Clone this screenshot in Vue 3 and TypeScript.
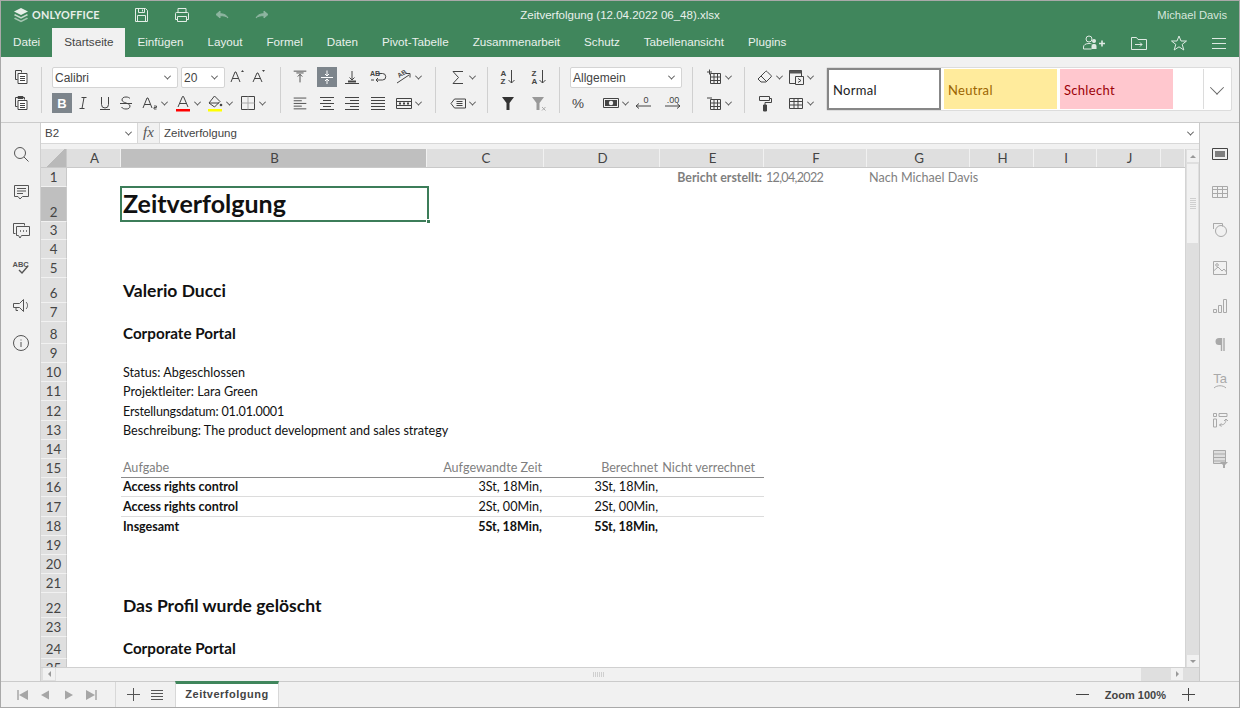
<script setup lang="ts">
// Spreadsheet editor window: header, ribbon, formula bar, sheet grid and status bar.
interface Tool { i?: string; w?: number; ml?: number; chev?: boolean; active?: boolean; dim?: boolean; combo?: string }
interface Group { w: number; rows: Tool[][] }
interface Cell { t: string; c?: string }

const line = (d: string) => `<path d="${d}"/>`

const icons: Record<string, string> = {
  logo: '<path d="M8 1 15 4.500 8 8 1 4.500Z" fill="currentColor" stroke="none"/><path d="M2 7 8 10l6-3 1 1.300-7 3.500-7-3.500Z" fill="currentColor" stroke="none" opacity=".8"/><path d="M2 10.500 8 13.500l6-3 1 1.300-7 3.500-7-3.500Z" fill="currentColor" stroke="none" opacity=".6"/>',
  save: '<path d="M3.500 3.500h10l2 2v11h-12Z"/><path d="M6.500 3.500v4h6v-4M10.500 4.500v2M5.500 16.500v-6h8v6"/>',
  print: '<path d="M6 7V3.500h8V7M5.500 14.500h-2v-6a1 1 0 0 1 1-1h11a1 1 0 0 1 1 1v6h-2"/><path d="M5.500 11.500h9v5h-9Z"/>',
  undo: '<path d="M4 9.500 8 6v2.700c4 0 6.500 1.300 8 4.300-2-2-4-2.300-8-2.300V13Z" fill="currentColor"/>',
  redo: '<path d="M16 9.500 12 6v2.700c-4 0-6.500 1.300-8 4.300 2-2 4-2.300 8-2.300V13Z" fill="currentColor"/>',
  person: '<circle cx="8" cy="6" r="3"/><path d="M2.500 16v-2c0-2 2-3.500 5.500-3.500 1 0 2 .1 2.500.4M2.500 16h8"/><circle cx="13" cy="8" r="2" fill="currentColor" stroke="none"/><path d="M10.500 16v-3a2 2 0 0 1 2-2h1a2 2 0 0 1 2 2v3Z" fill="currentColor" stroke="none"/><path d="M18 10.500h6M21 7.500v6" stroke-width="1.600"/>',
  folder: '<path d="M2.500 4.500h5l1.500 2h8.500v10h-15Z"/><path d="M6 11.500h7M11 9.500l2 2-2 2"/>',
  star: '<path d="M10 3l2 5h5.500l-4.300 3.400 1.600 5.600L10 13.800 5.200 17l1.600-5.600L2.500 8H8Z"/>',
  burger: line('M3 5.500h14M3 10.500h14M3 15.500h14'),
  copy: '<path d="M4.500 3.500h6v2M4.500 3.500v9h2"/><path d="M7 6.500h9v10H7Z" fill="#fff"/><path d="M9 9.500h5M9 11.500h5M9 13.500h5"/>',
  paste: '<path d="M4.500 4.500h9v2M4.500 4.500v9h2M7 3.500h5v2H7Z"/><path d="M7 7.500h9v9H7Z" fill="#fff"/><path d="M9 10.500h5M9 12.500h5M9 14.500h5"/>',
  grow: '<path d="M4 15 8 5h1l4 10M5.500 11.500h6"/><path d="M14 5l1.500-2L17 5Z" fill="currentColor" stroke="none"/>',
  shrink: '<path d="M5 15 9 6h1l4 9M6.500 11.500h6"/><path d="M14 3l1.500 2L17 3Z" fill="currentColor" stroke="none"/>',
  bold: '<text x="10" y="15" text-anchor="middle" font-family="Liberation Sans" font-size="13" font-weight="700" fill="#fff" stroke="none">B</text>',
  italic: line('M8.500 4.500h5M6.500 15.500h5M11 4.500l-2 11'),
  under: line('M6.500 4v7.500a3.500 3.500 0 0 0 7 0V4M5 16.500h10'),
  strike: line('M14 5.500c-1-1-2-1.500-4-1.500-2.500 0-4 1-4 3 0 3 8 3 8 6 0 2-1.500 3-4 3-2 0-3.500-.5-4.500-2M4 10.500h12'),
  sub: '<path d="M3 15 7 5h1l4 10M4.500 11.500h6"/><path d="M14 13h2.500v1.500H14V16h2.500" stroke-width=".9"/>',
  fontc: '<path d="M5 14 9.500 3.500h1L15 14M6.500 10.500h7"/><path d="M3 16h14v2.500H3Z" fill="#f00" stroke="none"/>',
  fill: '<path d="M9.500 3 15 8.500 9.500 14 4 10Z"/><path d="M4 10h10"/><circle cx="16" cy="12" r="1.300" fill="currentColor" stroke="none"/><path d="M3 16h14v2.500H3Z" fill="#ff0" stroke="none"/>',
  border: '<path d="M3.500 3.500h13v13h-13Z"/><path d="M10 3.500v13M3.500 10h13" stroke="#aaa"/>',
  atop: '<path d="M3 3.500h14M6 5.500h8" /><path d="M10 7v9M7.500 9.500 10 7l2.500 2.500"/>',
  amid: '<g stroke="#fff"><path d="M4 10.500h12"/><path d="M10 3.500v5M8 7l2 2 2-2M10 17v-5M8 14l2-2 2 2"/></g>',
  abot: '<path d="M3 16.500h14" /><path d="M6 14.500h8" stroke-width="2"/><path d="M10 4v9M7.500 10.500 10 13l2.500-2.500"/>',
  wrap: '<text x="2" y="8.500" font-family="Liberation Sans" font-size="7" font-weight="700" fill="currentColor" stroke="none">AB</text><path d="M11 6.500h3.500a3 3 0 0 1 0 6.500H8M10 11l-2 2 2 2M3 13h3"/>',
  orient: '<text x="4" y="9" font-family="Liberation Sans" font-size="6.500" font-weight="700" fill="currentColor" stroke="none" transform="rotate(-35 8 8)">AB</text><path d="M3 16 15 8M12 6.500h4v4"/>',
  left: line('M3 4.500h14M3 7.500h9M3 10.500h14M3 13.500h9M3 16.500h14'),
  center: line('M3 4.500h14M6 7.500h8M3 10.500h14M6 13.500h8M3 16.500h14'),
  right: line('M3 4.500h14M8 7.500h9M3 10.500h14M8 13.500h9M3 16.500h14'),
  just: line('M3 4.500h14M3 7.500h14M3 10.500h14M3 13.500h14M3 16.500h14'),
  merge: '<path d="M2.500 5.500h15v10h-15Z"/><path d="M2.500 8.500h15M2.500 12.500h15" /><path d="M5 10.500h2M9 10.500h2M13 10.500h2" stroke-width="2"/>',
  sigma: line('M15 4.500H5l5.500 6L5 16.500h10'),
  tag: '<path d="M3 10.500 6.500 6h11v9h-11Z"/><path d="M8.500 8.500h6M8.500 10.500h6M8.500 12.500h6" stroke-width="1.200"/>',
  az: '<text x="2.500" y="9" font-family="Liberation Sans" font-size="8" font-weight="700" fill="currentColor" stroke="none">A</text><text x="2.500" y="17" font-family="Liberation Sans" font-size="8" font-weight="700" fill="currentColor" stroke="none">Z</text><path d="M13.500 3v13M10.500 13l3 3 3-3"/>',
  za: '<text x="2.500" y="9" font-family="Liberation Sans" font-size="8" font-weight="700" fill="currentColor" stroke="none">Z</text><text x="2.500" y="17" font-family="Liberation Sans" font-size="8" font-weight="700" fill="currentColor" stroke="none">A</text><path d="M13.500 3v13M10.500 13l3 3 3-3"/>',
  filter: '<path d="M4 4h12l-4.500 6v7h-3v-7Z" fill="#333" stroke="none"/>',
  nofilter: '<path d="M3 4h12l-4.500 6v7h-3v-7Z" fill="#999" stroke="none"/><path d="M13 14l3.500 3.500M16.500 14 13 17.500" stroke="#aaa"/>',
  percent: '<text x="9" y="16" text-anchor="middle" font-family="Liberation Sans" font-size="15" fill="currentColor" stroke="none">%</text>',
  money: '<path d="M2.500 5.500h15v9h-15Z"/><path d="M4 7h12v6H4Z" fill="#444" stroke="none"/><circle cx="10" cy="10" r="2.200" fill="#f1f1f1" stroke="none"/>',
  decdn: '<text x="13" y="9.500" text-anchor="middle" font-family="Liberation Sans" font-size="9" fill="currentColor" stroke="none">0</text><path d="M18 13H3M6 10.500 3 13l3 2.500"/>',
  decup: '<text x="10" y="9.500" text-anchor="middle" font-family="Liberation Sans" font-size="9" fill="currentColor" stroke="none">.00</text><path d="M2 13h15M14 10.500l3 2.500-3 2.500"/>',
  rowadd: '<path d="M6.500 6.500h10v10h-10ZM6.500 10h10M6.500 13.500h10M10 6.500v10M13.500 6.500v10"/><path d="M3 5h5M5.500 2.500v5"/>',
  rowdel: '<path d="M6.500 6.500h10v10h-10ZM6.500 10h10M6.500 13.500h10M10 6.500v10M13.500 6.500v10"/><path d="M3 5h5"/>',
  eraser: '<path d="M3 12 10.500 4.500a1 1 0 0 1 1.500 0L16 8.500a1 1 0 0 1 0 1.500L11 15H6Z"/><path d="M6 9l6 6"/>',
  cond: '<path d="M3.500 3.500h12v13h-12Z"/><path d="M3.500 3.500h12v3h-12Z" fill="#555" stroke="none"/><path d="M9.500 9.500h8v8h-8Z" fill="#f1f1f1"/><path d="M12 11.500l3 2-3 2"/>',
  roller: '<path d="M4.500 3.500h10v4h-10Z"/><path d="M14.500 5.500h2v4H10v2.500"/><path d="M8.500 12h3v6h-3Z" fill="#444"/>',
  table: '<path d="M3.500 5.500h13v10h-13ZM3.500 8.500h13M3.500 12h13M8 5.500v10M12 5.500v10"/>',
  search: '<circle cx="9" cy="9" r="5.500"/><path d="M13 13l4.500 4.500"/>',
  comment: '<path d="M3.500 3.500h14v11h-6L9 17l-2-2.500H3.500Z"/><path d="M6 6.500h9M6 9h9M6 11.500h6"/>',
  chat: '<path d="M4.500 13.500h-2v-10h11v2"/><path d="M5.500 6.500h13v9h-8L9 18l-1.500-2.500h-2Z"/><path d="M9 11h1M12 11h1M15 11h1" stroke-width="1.600"/>',
  spell: '<text x="1.500" y="10" font-family="Liberation Sans" font-size="7.500" font-weight="700" fill="currentColor" stroke="none">ABC</text><path d="M8 13l3 3 6-7" stroke-width="1.400"/>',
  speak: '<path d="M2.500 8.500h6l4-4v12l-4-4h-6ZM5 12.500v3h2"/><path d="M15 7c1 1 1.500 2 1.500 3.500S16 13 15 14"/>',
  info: '<circle cx="10" cy="10" r="7.500"/><path d="M10 9v5M10 6.500v1"/>',
  cell: '<path d="M2.500 4.500h15v11h-15Z"/><path d="M5 7h10v6H5Z" fill="currentColor" stroke="none" opacity=".65"/>',
  grid: '<path d="M2.500 4.500h15v11h-15ZM2.500 7.500h15M2.500 11.500h15M7.500 4.500v11M12.500 4.500v11"/>',
  shape: '<path d="M8 3.500H3.500V9"/><path d="M3.500 3.500h9v3"/><circle cx="11" cy="11" r="5.500"/>',
  image: '<path d="M3.500 3.500h13v13h-13Z"/><circle cx="7" cy="7" r="1.300"/><path d="M3.500 13 8 9l4 4 2-2 2.500 3"/>',
  chart: '<path d="M3.500 13.500h3v3h-3ZM8.500 9.500h3v7h-3ZM13.500 3.500h3v13h-3Z"/>',
  para: '<path d="M14 4H9a3.500 3.500 0 0 0 0 7h2V4Z" fill="currentColor" stroke="none"/><path d="M11.500 4v13M14 4v13" stroke-width="1.400"/>',
  art: '<text x="10" y="10.500" text-anchor="middle" font-family="Liberation Sans" font-size="13" fill="currentColor" stroke="none">Ta</text><path d="M4 16c3-3 9-3 12 0"/>',
  pivot: '<path d="M3.500 3.500h3v3h-3ZM9 3.500h8v3H9ZM3.500 9h3v8h-3Z"/><path d="M9.500 15c4 0 6-1 6.500-5M14 11l2-2 2 2M9.500 15l2-1.500M9.500 15l2 1.500"/>',
  slicer: '<path d="M3.500 2.500h12v13h-12Z" fill="currentColor" opacity=".25"/><path d="M3.500 2.500h12v13h-12ZM3.500 6h12M3.500 9.500h12M3.500 13h12"/><path d="M10 14h8l-3 3v3h-2v-3Z" fill="currentColor" stroke="none"/>',
  first: '<path d="M6 5v10" stroke-width="1.500"/><path d="M16 5v10l-9-5Z" fill="currentColor" stroke="none"/>',
  prev: '<path d="M14 5.500v9L6 10Z" fill="currentColor" stroke="none"/>',
  next: '<path d="M6 5.500v9l8-4.500Z" fill="currentColor" stroke="none"/>',
  last: '<path d="M14 5v10" stroke-width="1.500"/><path d="M4 5v10l9-5Z" fill="currentColor" stroke="none"/>',
  plus: line('M4 10.500h13M10.500 4v13'),
  minus: line('M4 10.500h13'),
  list: line('M4 5.500h12M4 8.500h12M4 11.500h12M4 14.500h12')
}

const groups: Group[] = [
  { w: 20, rows: [[{ i: 'copy' }], [{ i: 'paste' }]] },
  { w: 218, rows: [
    [{ combo: 'Calibri', w: 126 }, { combo: '20', w: 44, ml: 3 }, { i: 'grow', ml: 2 }, { i: 'shrink', ml: 1 }],
    [{ i: 'bold', active: true }, { i: 'italic', ml: 1 }, { i: 'under', ml: 2 }, { i: 'strike', ml: 1 }, { i: 'sub', ml: 4, chev: true }, { i: 'fontc', ml: 5, chev: true }, { i: 'fill', ml: 4, chev: true }, { i: 'border', ml: 5, chev: true }]
  ] },
  { w: 134, rows: [
    [{ i: 'atop', w: 18 }, { i: 'amid', ml: 8, active: true }, { i: 'abot', ml: 5 }, { i: 'wrap', ml: 6 }, { i: 'orient', ml: 6, chev: true }],
    [{ i: 'left', w: 18 }, { i: 'center', ml: 8 }, { i: 'right', ml: 5 }, { i: 'just', ml: 6 }, { i: 'merge', ml: 6, chev: true }]
  ] },
  { w: 31, rows: [[{ i: 'sigma', ml: 2, chev: true }], [{ i: 'tag', ml: 2, chev: true }]] },
  { w: 51, rows: [[{ i: 'az' }, { i: 'za', ml: 11 }], [{ i: 'filter' }, { i: 'nofilter', ml: 11 }]] },
  { w: 112, rows: [
    [{ combo: 'Allgemein', w: 112 }],
    [{ i: 'percent', w: 18 }, { i: 'money', ml: 13, chev: true }, { i: 'decdn', ml: 4 }, { i: 'decup', ml: 10 }]
  ] },
  { w: 31, rows: [[{ i: 'rowadd', ml: 1, chev: true }], [{ i: 'rowdel', ml: 1, chev: true }]] },
  { w: 59, rows: [
    [{ i: 'eraser', chev: true }, { i: 'cond', ml: 3, chev: true }],
    [{ i: 'roller' }, { i: 'table', ml: 11, chev: true }]
  ] }
]

const tabs = ['Datei', 'Startseite', 'Einfügen', 'Layout', 'Formel', 'Daten', 'Pivot-Tabelle', 'Zusammenarbeit', 'Schutz', 'Tabellenansicht', 'Plugins']
const leftIcons = ['search', 'comment', 'chat', 'spell', 'speak', 'info']
const rightIcons = ['cell', 'grid', 'shape', 'image', 'chart', 'para', 'art', 'pivot', 'slicer']

const columns = [
  { n: 'A', w: 54 }, { n: 'B', w: 306 }, { n: 'C', w: 117 }, { n: 'D', w: 116 }, { n: 'E', w: 104 },
  { n: 'F', w: 103 }, { n: 'G', w: 103 }, { n: 'H', w: 64 }, { n: 'I', w: 63 }, { n: 'J', w: 64 }, { n: '', w: 24 }
]
const rowHeights = [19, 35, 18, 19, 19, 25, 19, 22, 19, 19, 19, 20, 19, 19, 19, 19, 20, 19, 19, 19, 19, 25, 19, 22, 19]

const cells: Record<string, Cell> = {
  E1: { t: 'Bericht erstellt:', c: 'r gb' },
  F1: { t: '12,04,2022', c: 'g tight' },
  G1: { t: 'Nach Michael Davis', c: 'g' },
  B2: { t: 'Zeitverfolgung', c: 'h1' },
  B6: { t: 'Valerio Ducci', c: 'h2' },
  B8: { t: 'Corporate Portal', c: 'h3' },
  B10: { t: 'Status: Abgeschlossen' },
  B11: { t: 'Projektleiter: Lara Green' },
  B12: { t: 'Erstellungsdatum: 01.01.0001', c: 'tight-s' },
  B13: { t: 'Beschreibung: The product development and sales strategy' },
  B15: { t: 'Aufgabe', c: 'g' },
  C15: { t: 'Aufgewandte Zeit', c: 'r g' },
  D15: { t: 'Berechnet', c: 'r g' },
  E15: { t: 'Nicht verrechnet', c: 'r g ind' },
  B16: { t: 'Access rights control', c: 'b' },
  C16: { t: '3St, 18Min,', c: 'r' },
  D16: { t: '3St, 18Min,', c: 'r' },
  B17: { t: 'Access rights control', c: 'b' },
  C17: { t: '2St, 00Min,', c: 'r' },
  D17: { t: '2St, 00Min,', c: 'r' },
  B18: { t: 'Insgesamt', c: 'b' },
  C18: { t: '5St, 18Min,', c: 'r b' },
  D18: { t: '5St, 18Min,', c: 'r b' },
  B22: { t: 'Das Profil wurde gelöscht', c: 'h2' },
  B24: { t: 'Corporate Portal', c: 'h3' }
}

const tableCols = ['B', 'C', 'D', 'E']
const cellClass = (col: string, row: number) => {
  const classes = [cells[col + row]?.c ?? '']
  if (tableCols.includes(col)) {
    if (row === 15) classes.push('line-dark')
    if (row === 16 || row === 17) classes.push('line-light')
  }
  return classes
}
</script>

<template>
  <div class="app">
    <header class="head">
      <div class="logo">
        <svg class="ico" width="16" height="16" viewBox="0 0 16 16" v-html="icons.logo" />
        <span>ONLYOFFICE</span>
      </div>
      <div class="quick">
        <svg v-for="q in ['save', 'print', 'undo', 'redo']" :key="q" class="ico" :class="{ faded: q === 'undo' || q === 'redo' }" width="20" height="20" viewBox="0 0 20 20" v-html="icons[q]" />
      </div>
      <div class="doc-title">Zeitverfolgung (12.04.2022 06_48).xlsx</div>
      <div class="user">Michael Davis</div>
    </header>

    <nav class="tabs">
      <div v-for="tab in tabs" :key="tab" class="tab" :class="{ on: tab === 'Startseite' }">{{ tab }}</div>
      <div class="tab-actions">
        <svg class="ico person" width="26" height="20" viewBox="0 0 26 20" v-html="icons.person" />
        <svg class="ico" width="20" height="20" viewBox="0 0 20 20" v-html="icons.folder" />
        <svg class="ico" width="20" height="20" viewBox="0 0 20 20" v-html="icons.star" />
        <svg class="ico" width="20" height="20" viewBox="0 0 20 20" v-html="icons.burger" />
      </div>
    </nav>

    <section class="ribbon">
      <template v-for="(group, g) in groups" :key="g">
        <div class="group" :style="{ width: group.w + 'px' }">
          <div v-for="(row, r) in group.rows" :key="r" class="tool-row">
            <template v-for="(tool, t) in row" :key="t">
              <div v-if="tool.combo" class="combo" :style="{ width: tool.w + 'px', marginLeft: (tool.ml ?? 0) + 'px' }">
                <span>{{ tool.combo }}</span>
                <i class="chev" />
              </div>
              <template v-else>
                <svg
                  class="ico tool"
                  :class="{ active: tool.active }"
                  :style="{ marginLeft: (tool.ml ?? 0) + 'px' }"
                  :width="tool.w ?? 20"
                  height="20"
                  viewBox="0 0 20 20"
                  v-html="icons[tool.i!]"
                />
                <span v-if="tool.chev" class="chev-box"><i class="chev" /></span>
              </template>
            </template>
          </div>
        </div>
        <div v-if="g < groups.length - 1" class="sep" />
      </template>

      <div class="gallery">
        <div class="style s-normal">Normal</div>
        <div class="style s-neutral">Neutral</div>
        <div class="style s-bad">Schlecht</div>
        <div class="style s-empty" />
        <div class="more"><i class="chev big" /></div>
      </div>
    </section>

    <main class="work">
      <aside class="side left-side">
        <svg v-for="ic in leftIcons" :key="ic" class="ico" width="20" height="20" viewBox="0 0 20 20" v-html="icons[ic]" />
      </aside>

      <div class="center">
        <div class="formula">
          <div class="name-box"><span>B2</span><i class="chev" /></div>
          <div class="fx">fx</div>
          <div class="input"><span>Zeitverfolgung</span><i class="chev" /></div>
        </div>

        <div class="sheet-wrap">
          <div class="sheet">
            <div class="col-heads">
              <div class="corner" />
              <div
                v-for="col in columns"
                :key="col.n"
                class="col-head"
                :class="{ sel: col.n === 'B' }"
                :style="{ width: col.w + 'px' }"
              >{{ col.n }}</div>
            </div>
            <div class="rows">
              <div v-for="(h, idx) in rowHeights" :key="idx" class="row" :style="{ height: h + 'px' }">
                <div class="row-head" :class="{ sel: idx === 1 }">{{ idx + 1 }}</div>
                <div
                  v-for="col in columns"
                  :key="col.n"
                  class="cell"
                  :class="cellClass(col.n, idx + 1)"
                  :style="{ width: col.w + 'px' }"
                >{{ cells[col.n + (idx + 1)]?.t }}</div>
              </div>
              <div class="selection"><b /></div>
            </div>
          </div>
          <div class="vbar">
            <div class="sb-btn"><i class="tri up" /></div>
            <div class="v-thumb"><span /></div>
            <div class="sb-space" />
            <div class="sb-btn"><i class="tri down" /></div>
          </div>
        </div>

        <div class="hbar">
          <div class="sb-btn"><i class="tri lft" /></div>
          <div class="h-thumb"><span /></div>
          <div class="sb-btn"><i class="tri rgt" /></div>
        </div>
      </div>

      <aside class="side right-side">
        <svg v-for="ic in rightIcons" :key="ic" class="ico" :class="{ 'side-on': ic === 'cell' }" width="20" height="20" viewBox="0 0 20 20" v-html="icons[ic]" />
      </aside>
    </main>

    <footer class="status">
      <div class="nav-btns">
        <svg v-for="n in ['first', 'prev', 'next', 'last']" :key="n" class="ico" width="20" height="20" viewBox="0 0 20 20" v-html="icons[n]" />
      </div>
      <div class="sheet-btns">
        <svg class="ico" width="21" height="21" viewBox="0 0 21 21" v-html="icons.plus" />
        <svg class="ico" width="20" height="20" viewBox="0 0 20 20" v-html="icons.list" />
      </div>
      <div class="sheet-tab">Zeitverfolgung</div>
      <div class="zoom">
        <svg class="ico" width="21" height="21" viewBox="0 0 21 21" v-html="icons.minus" />
        <span>Zoom 100%</span>
        <svg class="ico" width="21" height="21" viewBox="0 0 21 21" v-html="icons.plus" />
      </div>
    </footer>
  </div>
</template>

<style scoped>
.app {
  width: 1240px;
  height: 708px;
  box-sizing: border-box;
  border: 1px solid #a9a9a9;
  display: flex;
  flex-direction: column;
  overflow: hidden;
  font-family: "Liberation Sans", Arial, sans-serif;
  font-size: 12px;
  color: #444;
  background: #f1f1f1;
}
.ico {
  fill: none;
  stroke: currentColor;
  stroke-width: 1;
  flex: none;
  display: block;
}

/* header */
.head {
  height: 27px;
  flex: none;
  display: flex;
  align-items: center;
  background: #40865c;
  color: #fff;
  position: relative;
}
.logo {
  display: flex;
  align-items: center;
  gap: 3px;
  margin-left: 12px;
  width: 119px;
  color: #e8efe9;
}
.logo span {
  font-family: Lato, sans-serif;
  font-weight: 700;
  font-size: 10.800px;
  letter-spacing: .2px;
}
.quick {
  display: flex;
  gap: 20px;
  color: #e3ede6;
}
.quick .faded { color: #8db5a0; }
.doc-title {
  position: absolute;
  left: 0;
  right: 0;
  text-align: center;
  font-size: 11.500px;
  color: #e9f1ec;
}
.user {
  margin-left: auto;
  margin-right: 12px;
  font-size: 11.200px;
  color: #d7e6dc;
}
.tabs {
  height: 29px;
  flex: none;
  display: flex;
  background: #40865c;
  color: #e9f1ec;
  font-size: 11.660px;
}
.tab {
  padding: 0 12px;
  line-height: 28px;
  height: 29px;
}
.tab.on {
  background: #f1f1f1;
  color: #444;
}
.tab-actions {
  margin-left: auto;
  margin-right: 10px;
  display: flex;
  align-items: center;
  gap: 20px;
  color: #dfeae3;
}
.tab-actions .person { margin-right: 2px; }

/* ribbon */
.ribbon {
  height: 66px;
  flex: none;
  box-sizing: border-box;
  border-bottom: 1px solid #cbcbcb;
  display: flex;
  padding: 10px 0 0 10px;
}
.group {
  flex: none;
  display: flex;
  flex-direction: column;
  gap: 6px;
}
.tool-row {
  display: flex;
  height: 20px;
  white-space: nowrap;
}
.tool.active {
  background: #7d858c;
  color: #fff;
  stroke: #fff;
}
.sep {
  flex: none;
  width: 1px;
  height: 46px;
  background: #d0d0d0;
  margin: 0 10px;
}
.combo {
  box-sizing: border-box;
  flex: none;
  height: 21px;
  background: #fff;
  border: 1px solid #d4d4d4;
  border-radius: 2px;
  display: flex;
  align-items: center;
  justify-content: space-between;
  padding: 0 7px 0 2px;
  font-size: 12px;
  color: #444;
}
.chev {
  display: block;
  width: 4px;
  height: 4px;
  border-right: 1px solid #555;
  border-bottom: 1px solid #555;
  transform: rotate(45deg) translate(-1px, -1px);
}
.chev.big {
  width: 9px;
  height: 9px;
  border-color: #666;
}
.chev-box {
  width: 8px;
  height: 20px;
  flex: none;
  display: flex;
  align-items: center;
  justify-content: center;
}
.gallery {
  margin-left: 12px;
  width: 406px;
  height: 44px;
  flex: none;
  box-sizing: border-box;
  border: 1px solid #dcdcdc;
  border-radius: 2px;
  background: #fff;
  display: flex;
  align-items: stretch;
  padding: 1px;
  font-family: Lato, sans-serif;
  font-size: 13px;
  letter-spacing: .3px;
}
.style {
  box-sizing: border-box;
  display: flex;
  align-items: center;
  padding: 1px 0 0 4px;
  margin-right: 2px;
}
.s-normal {
  width: 114px;
  border: 2px solid #878787;
  color: #222;
  margin: -1px 3px -1px -1px;
}
.s-neutral { width: 113px; background: #ffeb9c; color: #9c6500; margin-right: 3px; }
.s-bad { width: 113px; background: #ffc7ce; color: #9c0006; }
.s-empty { width: 28px; margin-right: 0; }
.more {
  flex: 1;
  border-left: 1px solid #dcdcdc;
  display: flex;
  align-items: center;
  justify-content: center;
}

/* work area */
.work {
  flex: 1;
  display: flex;
  min-height: 0;
}
.side {
  flex: none;
  display: flex;
  flex-direction: column;
  align-items: center;
  color: #555;
}
.left-side {
  width: 40px;
  box-sizing: border-box;
  padding-top: 21px;
  gap: 17.800px;
  border-right: 1px solid #d0d0d0;
}
.right-side {
  width: 40px;
  box-sizing: border-box;
  padding-top: 21px;
  gap: 18px;
  border-left: 1px solid #cbcbcb;
  color: #a9a9a9;
}
.right-side .side-on { color: #444; }
.center {
  flex: 1;
  min-width: 0;
  display: flex;
  flex-direction: column;
}
.formula {
  height: 20px;
  flex: none;
  display: flex;
  background: #fff;
  border-bottom: 1px solid #d8d8d8;
  font-size: 11.500px;
}
.name-box {
  width: 97px;
  box-sizing: border-box;
  padding: 0 6px 0 4px;
  display: flex;
  align-items: center;
  justify-content: space-between;
  border-right: 1px solid #d8d8d8;
}
.fx {
  width: 21px;
  background: #f1f1f1;
  text-align: center;
  font-family: "Liberation Serif", serif;
  font-style: italic;
  font-size: 15px;
  line-height: 19px;
  color: #555;
  border-right: 1px solid #d8d8d8;
}
.input {
  flex: 1;
  padding: 0 6px 0 4px;
  display: flex;
  align-items: center;
  justify-content: space-between;
}
.sheet-wrap {
  margin-top: 5px;
  flex: 1;
  min-height: 0;
  display: flex;
}
.sheet {
  flex: 1;
  min-width: 0;
  background: #fff;
  display: flex;
  flex-direction: column;
  overflow: hidden;
  font-family: Lato, sans-serif;
  font-size: 12.600px;
  color: #111;
}
.col-heads {
  height: 18px;
  flex: none;
  display: flex;
  background: #dfdfdf;
  color: #444;
  font-size: 13.300px;
  border-bottom: 1px solid #c9c9c9;
}
.corner {
  width: 26px;
  flex: none;
  box-sizing: border-box;
  border-right: 1px solid #c9c9c9;
  position: relative;
  background: linear-gradient(135deg, #dfdfdf 55%, #b9b9b9 55%);
}
.col-head {
  flex: none;
  box-sizing: border-box;
  border-right: 1px solid #f1f1f1;
  padding-left: 2px;
  text-align: center;
  line-height: 18px;
}
.col-head.sel { background: #bfbfbf; }
.rows {
  position: relative;
  flex: 1;
  min-height: 0;
  overflow: hidden;
}
.row { display: flex; }
.row-head {
  width: 26px;
  flex: none;
  box-sizing: border-box;
  background: #dfdfdf;
  border-bottom: 1px solid #f1f1f1;
  border-right: 1px solid #c9c9c9;
  color: #444;
  font-size: 13.300px;
  display: flex;
  align-items: flex-end;
  justify-content: center;
  padding-bottom: 1px;
}
.row-head.sel { background: #bfbfbf; }
.cell {
  flex: none;
  box-sizing: border-box;
  display: flex;
  align-items: flex-end;
  padding: 0 2px 1px;
  white-space: nowrap;
  line-height: 17px;
}
.r { justify-content: flex-end; }
.g { color: #7f7f7f; }
.gb { color: #7f7f7f; font-weight: 700; font-size: 12.400px; }
.b { font-weight: 700; font-size: 12.500px; }
.tight { letter-spacing: -.7px; }
.tight-s { letter-spacing: -.18px; }
.h1 { font-size: 25px; font-weight: 700; line-height: 32px; padding-bottom: 3px; }
.h2 { font-size: 17.500px; font-weight: 700; line-height: 22px; }
.h3 { font-size: 15.200px; font-weight: 700; line-height: 19px; }
.ind { padding-right: 9px; }
.line-dark { border-bottom: 1px solid #8a8a8a; }
.line-light { border-bottom: 1px solid #dcdcdc; }
.selection {
  position: absolute;
  left: 79px;
  top: 18px;
  width: 309px;
  height: 36px;
  box-sizing: border-box;
  border: 2px solid #3c7d59;
  pointer-events: none;
}
.selection b {
  position: absolute;
  right: -4px;
  bottom: -4px;
  width: 5px;
  height: 5px;
  background: #3c7d59;
  border: 1px solid #fff;
  box-sizing: border-box;
}

/* scrollbars */
.vbar {
  width: 14px;
  flex: none;
  background: #dfdfdf;
  box-sizing: border-box;
  padding: 1px 1px 0;
  display: flex;
  flex-direction: column;
  gap: 2px;
  border-left: 1px solid #d4d4d4;
}
.sb-btn {
  width: 12px;
  height: 12px;
  flex: none;
  background: #f1f1f1;
  display: flex;
  align-items: center;
  justify-content: center;
}
.v-thumb {
  height: 79px;
  flex: none;
  background: #f1f1f1;
  display: flex;
  align-items: center;
  justify-content: center;
}
.v-thumb span {
  width: 6px;
  height: 12px;
  background: repeating-linear-gradient(#cfcfcf 0 1px, transparent 1px 2px);
}
.sb-space { flex: 1; }
.hbar {
  height: 14px;
  flex: none;
  box-sizing: border-box;
  background: #dfdfdf;
  border-top: 1px solid #d0d0d0;
  display: flex;
  gap: 1px;
  padding: 0 16px 0 2px;
}
.h-thumb {
  width: 1085px;
  background: #f1f1f1;
  display: flex;
  align-items: center;
  justify-content: center;
}
.h-thumb span {
  width: 12px;
  height: 5px;
  background: repeating-linear-gradient(90deg, #cfcfcf 0 1px, transparent 1px 2px);
}
.hbar .sb-btn:last-child { margin-left: auto; }
.tri { width: 0; height: 0; display: block; border: 3px solid transparent; }
.tri.up { border-bottom-color: #999; border-top-width: 0; }
.tri.down { border-top-color: #999; border-bottom-width: 0; }
.tri.lft { border-right-color: #999; border-left-width: 0; }
.tri.rgt { border-left-color: #999; border-right-width: 0; }

/* status bar */
.status {
  height: 26px;
  flex: none;
  box-sizing: border-box;
  display: flex;
  align-items: stretch;
  background: #f1f1f1;
  border-top: 1px solid #cbcbcb;
  position: relative;
}
.nav-btns {
  width: 115px;
  box-sizing: border-box;
  padding-left: 11px;
  display: flex;
  align-items: center;
  gap: 3.400px;
  color: #a6a6a6;
  border-right: 1px solid #d8d8d8;
}
.sheet-btns {
  width: 59px;
  box-sizing: border-box;
  padding-left: 7px;
  display: flex;
  align-items: center;
  gap: 3px;
  color: #555;
}
.sheet-tab {
  width: 104px;
  box-sizing: border-box;
  background: #fff;
  border-top: 3px solid #40865c;
  border-left: 1px solid #d8d8d8;
  border-right: 1px solid #d8d8d8;
  margin-top: -1px;
  text-align: center;
  font-weight: 700;
  font-size: 11px;
  letter-spacing: .5px;
  line-height: 20px;
  color: #444;
}
.zoom {
  margin-left: auto;
  margin-right: 40px;
  display: flex;
  align-items: center;
  gap: 12px;
  font-weight: 700;
  font-size: 11px;
  color: #444;
}
</style>

<style>
html, body { margin: 0; padding: 0; }
</style>
